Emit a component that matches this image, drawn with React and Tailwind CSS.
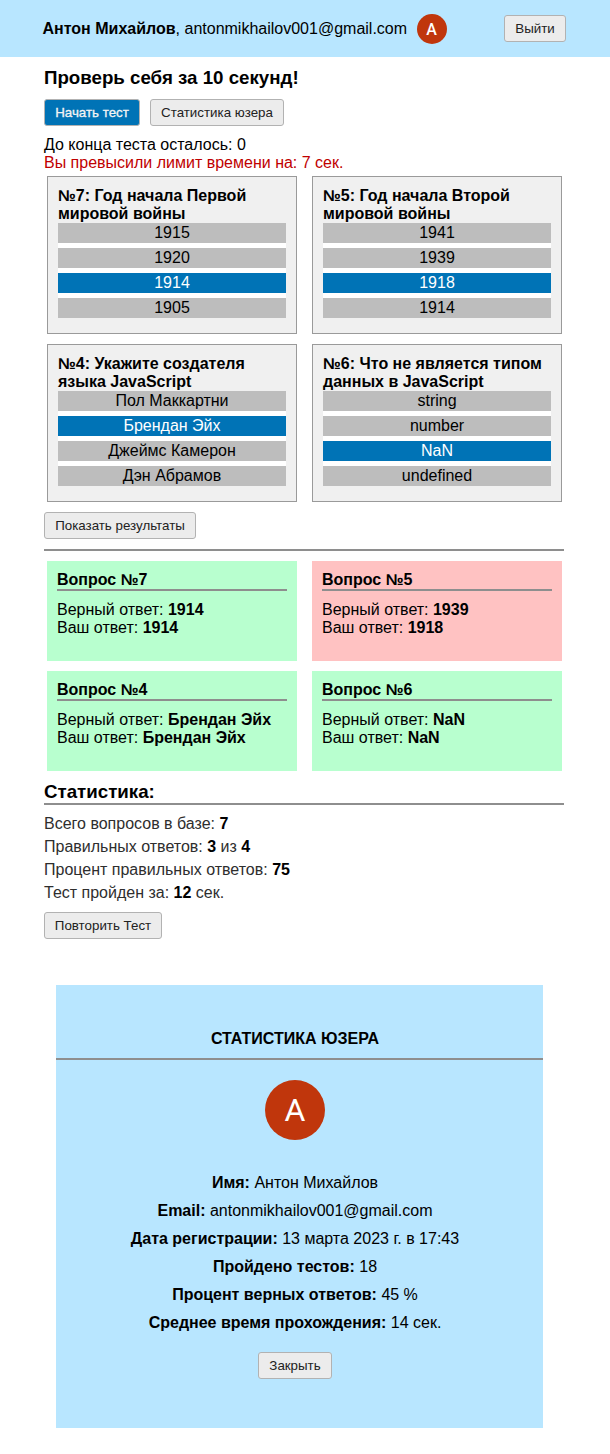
const questions = [
  { id: 7, title: "Год начала Первой мировой войны", options: ["1915", "1920", "1914", "1905"], picked: 2 },
  { id: 5, title: "Год начала Второй мировой войны", options: ["1941", "1939", "1918", "1914"], picked: 2 },
  { id: 4, title: "Укажите создателя языка JavaScript", options: ["Пол Маккартни", "Брендан Эйх", "Джеймс Камерон", "Дэн Абрамов"], picked: 1 },
  { id: 6, title: "Что не является типом данных в JavaScript", options: ["string", "number", "NaN", "undefined"], picked: 2 },
];

const results = [
  { id: 7, right: "1914", given: "1914" },
  { id: 5, right: "1939", given: "1918" },
  { id: 4, right: "Брендан Эйх", given: "Брендан Эйх" },
  { id: 6, right: "NaN", given: "NaN" },
];

const profile = [
  ["Имя:", "Антон Михайлов"],
  ["Email:", "antonmikhailov001@gmail.com"],
  ["Дата регистрации:", "13 марта 2023 г. в 17:43"],
  ["Пройдено тестов:", "18"],
  ["Процент верных ответов:", "45 %"],
  ["Среднее время прохождения:", "14 сек."],
];

function Button({ primary, width, children }) {
  const tone = primary
    ? "bg-[#0073b6] text-[#f4f4f4] [-webkit-text-stroke:0.3px_#f4f4f4]"
    : "bg-[#ececec] text-[#222222]";
  return (
    <button
      className={`flex h-[27px] items-center justify-center rounded-[3px] border border-[#b2b2b2] text-[13.333px] leading-[15px] whitespace-nowrap ${width} ${tone}`}
    >
      {children}
    </button>
  );
}

function Question({ id, title, options, picked }) {
  return (
    <section className="h-[158px] border border-[#9a9a9a] bg-[#f0f0f0] p-[10px]">
      <h3 className="font-bold">{`№${id}: ${title}`}</h3>
      <div className="flex flex-col gap-[5px] bg-white text-center">
        {options.map((option, i) => (
          <div
            key={option}
            className={`h-5 leading-5 ${i === picked ? "bg-[#0073b6] text-white" : "bg-[#bdbdbd]"}`}
          >
            {option}
          </div>
        ))}
      </div>
    </section>
  );
}

function Result({ id, right, given }) {
  return (
    <section className={`h-[100px] p-[10px] ${right === given ? "bg-[#b8ffcf]" : "bg-[#ffc2c2]"}`}>
      <h3 className="mb-[10px] border-b-2 border-[#8e8e8e] font-bold">{`Вопрос №${id}`}</h3>
      <p>Верный ответ: <b>{right}</b></p>
      <p>Ваш ответ: <b>{given}</b></p>
    </section>
  );
}

export default function App() {
  return (
    <div className="min-h-[1454px] bg-white font-['Liberation_Sans',Arial,sans-serif] text-base leading-[18px] text-black">
      <header className="flex h-[57px] items-center bg-[#b8e6ff] pr-11 pl-[42.5px]">
        <p className="whitespace-nowrap"><b>Антон Михайлов</b>, antonmikhailov001@gmail.com</p>
        <div className="mt-px ml-[9.5px] flex size-[30px] items-center justify-center rounded-full bg-[#c0360c] pt-px font-[Roboto,sans-serif] text-base font-medium text-white">
          A
        </div>
        <div className="ml-auto">
          <Button width="w-[62px]">Выйти</Button>
        </div>
      </header>

      <main className="w-[564px] pl-11">
        <h1 className="pt-[10px] text-[18.72px] leading-[21px] font-bold">Проверь себя за 10 секунд!</h1>
        <div className="mt-[11px] flex gap-[10px]">
          <Button primary width="w-24">Начать тест</Button>
          <Button width="w-[134px]">Статистика юзера</Button>
        </div>
        <p className="mt-[10px]">До конца теста осталось: 0</p>
        <p className="text-[#c00000]">Вы превысили лимит времени на: 7 сек.</p>

        <div className="mt-[4px] ml-[3px] grid grid-cols-[250px_250px] gap-x-[15px] gap-y-[10px]">
          {questions.map((q) => <Question key={q.id} {...q} />)}
        </div>

        <div className="mt-[10px] border-b-2 border-[#8e8e8e] pb-[10px]">
          <Button width="w-[152px]">Показать результаты</Button>
        </div>

        <div className="mt-[10px] ml-[3px] grid grid-cols-[250px_250px] gap-x-[15px] gap-y-[10px]">
          {results.map((r) => <Result key={r.id} {...r} />)}
        </div>

        <h2 className="mt-[10px] border-b-2 border-[#8e8e8e] pb-px text-[18.72px] leading-[21px] font-bold">Статистика:</h2>
        <div className="mt-[7px] mb-2 leading-[23px] text-[#2e2e2e] [&_b]:text-black">
          <p>Всего вопросов в базе: <b>7</b></p>
          <p>Правильных ответов: <b>3</b> из <b>4</b></p>
          <p>Процент правильных ответов: <b>75</b></p>
          <p>Тест пройден за: <b>12</b> сек.</p>
        </div>
        <Button width="w-[118px]">Повторить Тест</Button>
      </main>

      <aside className="mt-[46px] ml-14 h-[443px] w-[487px] bg-[#b8e6ff] pt-[45px] text-center">
        <h2 className="border-b-2 border-[#8e8e8e] pr-[9px] pb-[10px] font-bold">СТАТИСТИКА ЮЗЕРА</h2>
        <div className="flex flex-col items-center pr-[9px]">
          <div className="mt-5 mb-[29px] flex size-[60px] items-center justify-center rounded-full bg-[#c0360c] pb-px font-[Roboto,sans-serif] text-[32px] text-white">
            A
          </div>
          {profile.map(([label, value]) => (
            <p key={label} className="leading-7"><b>{label}</b> {value}</p>
          ))}
          <div className="mt-[15px]">
            <Button width="w-[74px]">Закрыть</Button>
          </div>
        </div>
      </aside>
    </div>
  );
}
